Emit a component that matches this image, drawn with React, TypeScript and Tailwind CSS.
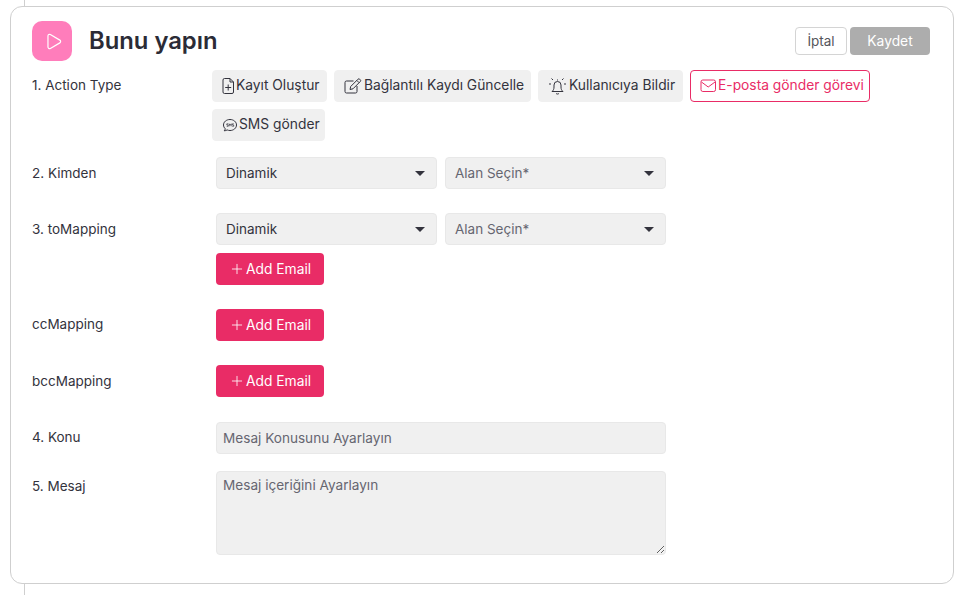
import { Play, Plus } from 'lucide-react'

const FONT = "font-['Inter','Noto_Sans',sans-serif]"

const FileIcon = () => (
  <svg viewBox="0 0 14 16" fill="none" stroke="currentColor" strokeWidth="1" className="w-[14px] h-4 shrink-0">
    <path d="M1 2a1.5 1.5 0 0 1 1.5-1.5H8L11.5 4v10a1.500 1.500 0 0 1-1.500 1.500H2.500A1.500 1.500 0 0 1 1 14z" />
    <path d="M8 .5V4h3.500M6.200 6.500v6M3.200 9.500h6" />
  </svg>
)

const PenIcon = () => (
  <svg viewBox="0 0 20 16" fill="none" stroke="currentColor" strokeWidth="1" className="w-5 h-4 shrink-0">
    <path d="M9.500 3H2.500A1.500 1.500 0 0 0 1 4.500v9A1.500 1.500 0 0 0 2.500 15h9a1.500 1.500 0 0 0 1.500-1.500V8" />
    <path d="M6 11.500l.7-3L14 1.200a1.200 1.200 0 0 1 1.700 0l.6.6a1.200 1.200 0 0 1 0 1.700L9 10.800zM12.800 2.400l2.300 2.300" />
  </svg>
)

const BellIcon = () => (
  <svg viewBox="0 0 21 18" fill="none" stroke="currentColor" strokeWidth="1" className="w-[21px] h-[18px] shrink-0">
    <path d="M4 14.500c1.400-1.200 2-2.400 2-4.500V8a3.500 3.500 0 0 1 7 0v2c0 2.100.6 3.300 2 4.500z" />
    <path d="M8 16.300c.8 1 2.200 1 3 0M9.500 3.500V2.500M3.500 1.500l1.500 1.500M15.500 1.500L14 3M1 7h2M16 7h2" />
  </svg>
)

const MailIcon = () => (
  <svg viewBox="0 0 18 14" fill="none" stroke="currentColor" strokeWidth="1" className="w-[18px] h-[14px] shrink-0">
    <rect x="1" y="1" width="14.500" height="11.500" rx="1.800" />
    <path d="M1.500 3l6.700 5 6.800-5" />
  </svg>
)

const SmsIcon = () => (
  <svg viewBox="0 0 17 16" fill="none" stroke="currentColor" strokeWidth="1" className="w-[17px] h-4 shrink-0">
    <path d="M2.200 13.800c1.200 0 2.200-.4 2.900-.9 1 .4 1.800.6 2.900.6 3.600 0 6.500-2.400 6.500-5.500S11.600 2.500 8 2.500 1.500 4.900 1.500 8c0 1.500.7 2.800 1.800 3.800-.2.800-.6 1.500-1.100 2z" />
    <path d="M4.700 9.300h1.500V8H4.800V6.800h1.500M7.200 9.300V6.800l1 1.500 1-1.500v2.500M10.200 9.300h1.500V8h-1.400V6.800h1.500" strokeWidth=".7" />
  </svg>
)

const Chip = ({
  icon,
  label,
  width,
  active = false,
}: {
  icon: React.ReactNode
  label: string
  width: string
  active?: boolean
}) => (
  <button
    className={`${width} h-8 pl-[9px] pb-[1px] flex items-center rounded text-[13.8px] border ${
      active ? 'bg-white border-[#e92c66] text-[#e92c66]' : 'bg-[#f0f0f0] border-[#f0f0f0] text-[#33333d]'
    }`}
  >
    {icon}
    <span>{label}</span>
  </button>
)

const SelectBox = ({ label, placeholder = false }: { label: string; placeholder?: boolean }) => (
  <div className="w-[221px] h-8 px-[9px] flex items-center justify-between rounded bg-[#f0f0f0] border border-[#e8e8e8] text-[13.5px]">
    <span className={placeholder ? 'text-[#666670]' : 'text-[#33333d]'}>{label}</span>
    <span className="mr-[2px] w-0 h-0 border-x-[5px] border-x-transparent border-t-[5px] border-t-[#33333d]" />
  </div>
)

const AddEmail = () => (
  <button className="w-[108px] h-8 pl-[13px] flex items-center gap-[1px] rounded bg-[#e92c66] text-white text-[13.8px]">
    <Plus size={16} strokeWidth={1.25} />
    <span>Add Email</span>
  </button>
)

const Row = ({
  label,
  className = '',
  labelClass = 'pt-[5px]',
  children,
}: {
  label: string
  className?: string
  labelClass?: string
  children: React.ReactNode
}) => (
  <div className={`flex ${className}`}>
    <div className={`w-[184px] shrink-0 text-[13.5px] text-[#33333d] ${labelClass}`}>{label}</div>
    {children}
  </div>
)

export default function App() {
  return (
    <div className={`${FONT} w-[965px] h-[595px] bg-white overflow-hidden`}>
      <div className="ml-[24px] w-px h-[6px] bg-[#cfcfcf]" />
      <div className="ml-[10px] w-[944px] h-[578px] rounded-[12px] border border-[#cfcfcf] pt-[14px] pl-[21px] pr-[23px]">
        {/* Header */}
        <div className="flex items-center justify-between">
          <div className="flex items-center gap-[17px]">
            <div className="w-10 h-10 rounded-[10px] bg-[#ff7dbb] flex items-center justify-center">
              <Play size={19} strokeWidth={1.5} className="text-white ml-[2px]" />
            </div>
            <h1 className="text-[23.8px] font-semibold text-[#2b2b36]">Bunu yapın</h1>
          </div>
          <div className="flex items-center gap-[3px]">
            <button className="w-[52px] h-[28px] rounded border border-[#d4d4d4] bg-white text-[13.5px] text-[#55555c]">İptal</button>
            <button className="w-[80px] h-[28px] rounded bg-[#adadad] text-[13.8px] text-white">Kaydet</button>
          </div>
        </div>

        {/* Action type */}
        <Row label="1. Action Type" className="mt-[9px]">
          <div className="-ml-1 w-[670px] flex flex-wrap gap-[7px]">
            <Chip width="w-[115px]" icon={<FileIcon />} label="Kayıt Oluştur" />
            <Chip width="w-[197px]" icon={<PenIcon />} label="Bağlantılı Kaydı Güncelle" />
            <Chip width="w-[145px]" icon={<BellIcon />} label="Kullanıcıya Bildir" />
            <Chip width="w-[180px]" active icon={<MailIcon />} label="E-posta gönder görevi" />
            <Chip width="w-[113px]" icon={<SmsIcon />} label="SMS gönder" />
          </div>
        </Row>

        <Row label="2. Kimden" className="mt-4" labelClass="pt-[6px]">
          <div className="flex gap-2">
            <SelectBox label="Dinamik" />
            <SelectBox label="Alan Seçin*" placeholder />
          </div>
        </Row>

        <Row label="3. toMapping" className="mt-6" labelClass="pt-[6px]">
          <div className="flex flex-col gap-2">
            <div className="flex gap-2">
              <SelectBox label="Dinamik" />
              <SelectBox label="Alan Seçin*" placeholder />
            </div>
            <div>
              <AddEmail />
            </div>
          </div>
        </Row>

        <Row label="ccMapping" className="mt-6">
          <AddEmail />
        </Row>

        <Row label="bccMapping" className="mt-6" labelClass="pt-[6px]">
          <AddEmail />
        </Row>

        <Row label="4. Konu" className="mt-[25px]">
          <input
            placeholder="Mesaj Konusunu Ayarlayın"
            className="w-[450px] h-8 px-[6px] pb-[1px] rounded bg-[#f0f0f0] border border-[#e8e8e8] text-[13.6px] placeholder:text-[#666670] outline-none"
          />
        </Row>

        <Row label="5. Mesaj" className="mt-[17px]">
          <textarea
            placeholder="Mesaj içeriğini Ayarlayın"
            className="w-[450px] h-[84px] px-[6px] py-[3px] rounded bg-[#f0f0f0] border border-[#e8e8e8] text-[13.6px] placeholder:text-[#666670] outline-none"
          />
        </Row>
      </div>
      <div className="ml-[24px] w-px h-[11px] bg-[#cfcfcf]" />
    </div>
  )
}
